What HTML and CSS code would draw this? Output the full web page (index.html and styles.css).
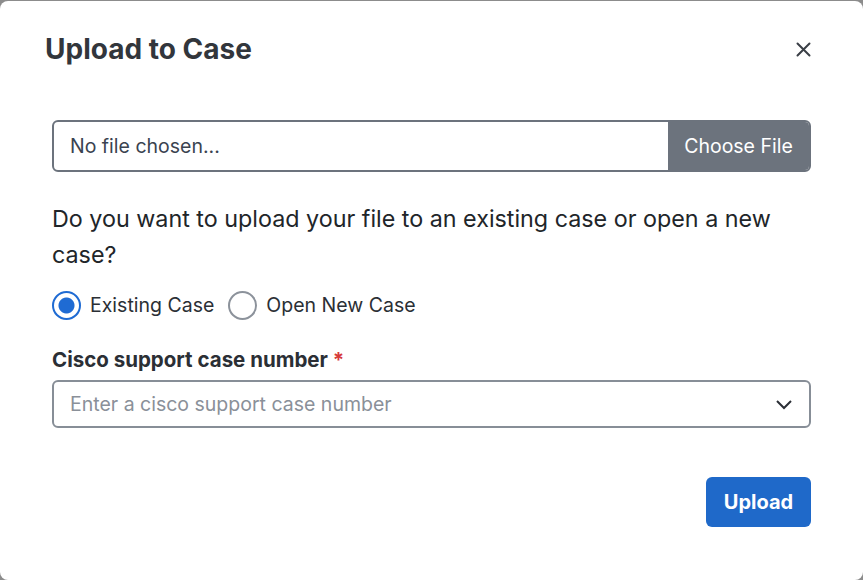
FILE: index.html
```html
<!DOCTYPE html>
<html>
<head>
<meta charset="utf-8">
<link rel="stylesheet" href="styles.css">
</head>
<body>
<div class="modal">
  <div class="header">
    <h1 class="title">Upload to Case</h1>
    <button class="close" aria-label="Close">
      <svg width="15" height="15" viewBox="0 0 15 15"><path d="M1.5 1.5 L13.5 13.5 M13.5 1.5 L1.5 13.5" stroke="#3a3f46" stroke-width="2" stroke-linecap="round"/></svg>
    </button>
  </div>
  <div class="body">
    <div class="file">
      <span class="file-text">No file chosen...</span>
      <span class="file-btn">Choose File</span>
    </div>
    <p class="question">Do you want to upload your file to an existing case or open a new case?</p>
    <div class="radios">
      <label class="radio"><span class="dot checked"></span>Existing Case</label>
      <label class="radio"><span class="dot"></span>Open New Case</label>
    </div>
    <div class="label">Cisco support case number <span class="req">*</span></div>
    <div class="select">
      <span class="placeholder">Enter a cisco support case number</span>
      <svg width="18" height="12" viewBox="0 0 18 12"><path d="M2 3 L9 10 L16 3" fill="none" stroke="#2b2f36" stroke-width="2"/></svg>
    </div>
    <div class="footer">
      <button class="upload">Upload</button>
    </div>
  </div>
</div>
</body>
</html>
```
FILE: styles.css
```css
html, body {
  margin: 0;
  padding: 0;
  height: 100%;
}
body {
  background: #8c8c8c;
  font-family: Inter, "Noto Sans", sans-serif;
  color: #212529;
}
.modal {
  box-sizing: border-box;
  margin-top: 1px;
  height: 579px;
  background: #fff;
  border-radius: 8px;
}
.header {
  display: flex;
  align-items: center;
  justify-content: space-between;
  padding: 30px 52px 0 45px;
  height: 36px;
}
.title {
  margin: 0;
  font-size: 28px;
  font-weight: 700;
  color: #32363c;
}
.close {
  border: 0;
  background: none;
  padding: 0;
  width: 15px;
  height: 15px;
  display: flex;
}
.body {
  padding: 53px 52px 0 52px;
}
.file {
  display: flex;
  height: 52px;
  box-sizing: border-box;
  border: 2px solid #6c737d;
  border-radius: 6px;
  overflow: hidden;
}
.file-text {
  flex: 1;
  display: flex;
  align-items: center;
  padding-left: 16px;
  font-size: 19.5px;
  color: #3a4350;
}
.file-btn {
  width: 141px;
  background: #6c737d;
  color: #fff;
  display: flex;
  align-items: center;
  justify-content: center;
  font-size: 19.5px;
}
.question {
  margin: 29px 0 0 0;
  font-size: 23.3px;
  line-height: 36px;
  color: #212529;
}
.radios {
  display: flex;
  gap: 14px;
  margin-top: 17px;
  height: 30px;
  align-items: center;
}
.radio {
  display: flex;
  align-items: center;
  gap: 9px;
  font-size: 19.5px;
  color: #2b2f35;
}
.dot {
  box-sizing: border-box;
  width: 29px;
  height: 29px;
  border-radius: 50%;
  border: 2.5px solid #8c929b;
  background: #fff;
}
.dot.checked {
  border-color: #1f6bd3;
  background: radial-gradient(circle, #1f6bd3 0 7.5px, #fff 8.5px);
}
.label {
  margin-top: 28px;
  font-size: 20.5px;
  font-weight: 700;
  color: #2b2f35;
  line-height: 24px;
}
.req {
  color: #d63a3a;
}
.select {
  margin-top: 8px;
  box-sizing: border-box;
  height: 48px;
  border: 2px solid #878e97;
  border-radius: 6px;
  display: flex;
  align-items: center;
  justify-content: space-between;
  padding: 0 16px 0 16px;
}
.placeholder {
  font-size: 19.5px;
  color: #8a9099;
}
.footer {
  display: flex;
  justify-content: flex-end;
  margin-top: 49px;
}
.upload {
  width: 105px;
  height: 50px;
  border: 0;
  border-radius: 6px;
  background: #1f69c9;
  color: #fff;
  font-family: Inter, "Noto Sans", sans-serif;
  font-size: 20px;
  font-weight: 700;
}
```
